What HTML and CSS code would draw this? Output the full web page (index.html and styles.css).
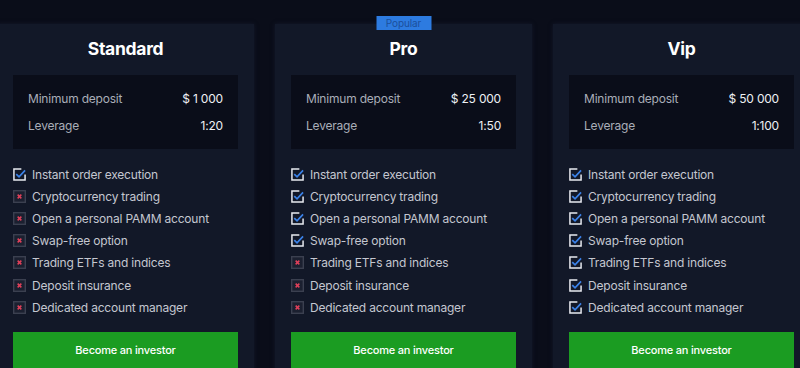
FILE: index.html
```html
<!DOCTYPE html>
<html lang="en">
<head>
<meta charset="utf-8">
<title>Plans</title>
<link rel="stylesheet" href="styles.css">
</head>
<body>
<div class="plans">
  <div class="card">
    <h2 class="title">Standard</h2>
    <div class="terms">
      <div class="row"><span class="label">Minimum deposit</span><span class="value">$ 1 000</span></div>
      <div class="row"><span class="label">Leverage</span><span class="value">1:20</span></div>
    </div>
    <ul class="features">
      <li><svg class="ic" viewBox="0 0 14 14"><path class="box" d="M9 1H1V13H13V7"/><path class="tick" d="M3.5 6.5L6.5 9.5L13 2.5"/></svg>Instant order execution</li>
      <li><svg class="ic" viewBox="0 0 14 14"><rect class="xbox" x="0.75" y="0.75" width="12.5" height="12.5"/><path class="x" d="M5 5L9 9M9 5L5 9"/></svg>Cryptocurrency trading</li>
      <li><svg class="ic" viewBox="0 0 14 14"><rect class="xbox" x="0.75" y="0.75" width="12.5" height="12.5"/><path class="x" d="M5 5L9 9M9 5L5 9"/></svg>Open a personal PAMM account</li>
      <li><svg class="ic" viewBox="0 0 14 14"><rect class="xbox" x="0.75" y="0.75" width="12.5" height="12.5"/><path class="x" d="M5 5L9 9M9 5L5 9"/></svg>Swap-free option</li>
      <li><svg class="ic" viewBox="0 0 14 14"><rect class="xbox" x="0.75" y="0.75" width="12.5" height="12.5"/><path class="x" d="M5 5L9 9M9 5L5 9"/></svg>Trading ETFs and indices</li>
      <li><svg class="ic" viewBox="0 0 14 14"><rect class="xbox" x="0.75" y="0.75" width="12.5" height="12.5"/><path class="x" d="M5 5L9 9M9 5L5 9"/></svg>Deposit insurance</li>
      <li><svg class="ic" viewBox="0 0 14 14"><rect class="xbox" x="0.75" y="0.75" width="12.5" height="12.5"/><path class="x" d="M5 5L9 9M9 5L5 9"/></svg>Dedicated account manager</li>
    </ul>
    <button class="btn">Become an investor</button>
  </div>

  <div class="card">
    <span class="badge">Popular</span>
    <h2 class="title">Pro</h2>
    <div class="terms">
      <div class="row"><span class="label">Minimum deposit</span><span class="value">$ 25 000</span></div>
      <div class="row"><span class="label">Leverage</span><span class="value">1:50</span></div>
    </div>
    <ul class="features">
      <li><svg class="ic" viewBox="0 0 14 14"><path class="box" d="M9 1H1V13H13V7"/><path class="tick" d="M3.5 6.5L6.5 9.5L13 2.5"/></svg>Instant order execution</li>
      <li><svg class="ic" viewBox="0 0 14 14"><path class="box" d="M9 1H1V13H13V7"/><path class="tick" d="M3.5 6.5L6.5 9.5L13 2.5"/></svg>Cryptocurrency trading</li>
      <li><svg class="ic" viewBox="0 0 14 14"><path class="box" d="M9 1H1V13H13V7"/><path class="tick" d="M3.5 6.5L6.5 9.5L13 2.5"/></svg>Open a personal PAMM account</li>
      <li><svg class="ic" viewBox="0 0 14 14"><path class="box" d="M9 1H1V13H13V7"/><path class="tick" d="M3.5 6.5L6.5 9.5L13 2.5"/></svg>Swap-free option</li>
      <li><svg class="ic" viewBox="0 0 14 14"><rect class="xbox" x="0.75" y="0.75" width="12.5" height="12.5"/><path class="x" d="M5 5L9 9M9 5L5 9"/></svg>Trading ETFs and indices</li>
      <li><svg class="ic" viewBox="0 0 14 14"><rect class="xbox" x="0.75" y="0.75" width="12.5" height="12.5"/><path class="x" d="M5 5L9 9M9 5L5 9"/></svg>Deposit insurance</li>
      <li><svg class="ic" viewBox="0 0 14 14"><rect class="xbox" x="0.75" y="0.75" width="12.5" height="12.5"/><path class="x" d="M5 5L9 9M9 5L5 9"/></svg>Dedicated account manager</li>
    </ul>
    <button class="btn">Become an investor</button>
  </div>

  <div class="card">
    <h2 class="title">Vip</h2>
    <div class="terms">
      <div class="row"><span class="label">Minimum deposit</span><span class="value">$ 50 000</span></div>
      <div class="row"><span class="label">Leverage</span><span class="value">1:100</span></div>
    </div>
    <ul class="features">
      <li><svg class="ic" viewBox="0 0 14 14"><path class="box" d="M9 1H1V13H13V7"/><path class="tick" d="M3.5 6.5L6.5 9.5L13 2.5"/></svg>Instant order execution</li>
      <li><svg class="ic" viewBox="0 0 14 14"><path class="box" d="M9 1H1V13H13V7"/><path class="tick" d="M3.5 6.5L6.5 9.5L13 2.5"/></svg>Cryptocurrency trading</li>
      <li><svg class="ic" viewBox="0 0 14 14"><path class="box" d="M9 1H1V13H13V7"/><path class="tick" d="M3.5 6.5L6.5 9.5L13 2.5"/></svg>Open a personal PAMM account</li>
      <li><svg class="ic" viewBox="0 0 14 14"><path class="box" d="M9 1H1V13H13V7"/><path class="tick" d="M3.5 6.5L6.5 9.5L13 2.5"/></svg>Swap-free option</li>
      <li><svg class="ic" viewBox="0 0 14 14"><path class="box" d="M9 1H1V13H13V7"/><path class="tick" d="M3.5 6.5L6.5 9.5L13 2.5"/></svg>Trading ETFs and indices</li>
      <li><svg class="ic" viewBox="0 0 14 14"><path class="box" d="M9 1H1V13H13V7"/><path class="tick" d="M3.5 6.5L6.5 9.5L13 2.5"/></svg>Deposit insurance</li>
      <li><svg class="ic" viewBox="0 0 14 14"><path class="box" d="M9 1H1V13H13V7"/><path class="tick" d="M3.5 6.5L6.5 9.5L13 2.5"/></svg>Dedicated account manager</li>
    </ul>
    <button class="btn">Become an investor</button>
  </div>
</div>
</body>
</html>
```

FILE: styles.css
```css
html, body {
  margin: 0;
  padding: 0;
  background: #0a0d19;
  overflow: hidden;
  height: 368px;
}
body {
  font-family: Inter, "Noto Sans", sans-serif;
  color: #c9ccd4;
}
.plans {
  display: flex;
  gap: 21px;
  margin-left: -3px;
  padding-top: 24px;
  width: 900px;
}
.card {
  position: relative;
  flex: 0 0 257px;
  box-sizing: border-box;
  background: #121828;
  padding: 12px 16px 0;
  height: 360px;
  box-shadow: 0 0 4px rgba(24, 30, 52, 0.7);
}
.badge {
  position: absolute;
  top: -8px;
  left: 50%;
  transform: translateX(-50%);
  width: 55px;
  height: 14px;
  box-sizing: border-box;
  background: #2d7be0;
  color: #1b4f9c;
  font-size: 10px;
  line-height: 14px;
  letter-spacing: -0.1px;
  text-align: center;
}
.title {
  margin: 0;
  font-size: 17.5px;
  line-height: 26px;
  font-weight: 700;
  letter-spacing: -0.3px;
  color: #ffffff;
  text-align: center;
}
.terms {
  margin-top: 13px;
  background: #0a0d19;
  padding: 15px 15px 14px;
  display: flex;
  flex-direction: column;
  gap: 9px;
}
.row {
  display: flex;
  justify-content: space-between;
  font-size: 12px;
  letter-spacing: -0.2px;
  line-height: 18px;
}
.label {
  color: #a9adb8;
}
.value {
  color: #eef0f4;
}
.features {
  list-style: none;
  margin: 14px 0 0;
  padding: 0;
}
.features li {
  display: flex;
  align-items: center;
  gap: 6px;
  height: 22.2px;
  font-size: 12px;
  letter-spacing: -0.2px;
  color: #c4c7d0;
}
.ic {
  width: 13px;
  height: 13px;
  flex: 0 0 13px;
  overflow: visible;
}
.box {
  fill: none;
  stroke: #e8eaf0;
  stroke-width: 1.6;
}
.tick {
  fill: none;
  stroke: #3b82e8;
  stroke-width: 1.8;
}
.xbox {
  fill: #1b2030;
  stroke: #3b4050;
  stroke-width: 1.5;
}
.x {
  stroke: #e0405a;
  stroke-width: 1.6;
}
.btn {
  display: block;
  width: 100%;
  margin-top: 14px;
  height: 36px;
  border: 0;
  background: #1b9c22;
  color: #ffffff;
  font-family: Inter, "Noto Sans", sans-serif;
  font-size: 11px;
  font-weight: 500;
  letter-spacing: -0.2px;
  cursor: pointer;
}
```
